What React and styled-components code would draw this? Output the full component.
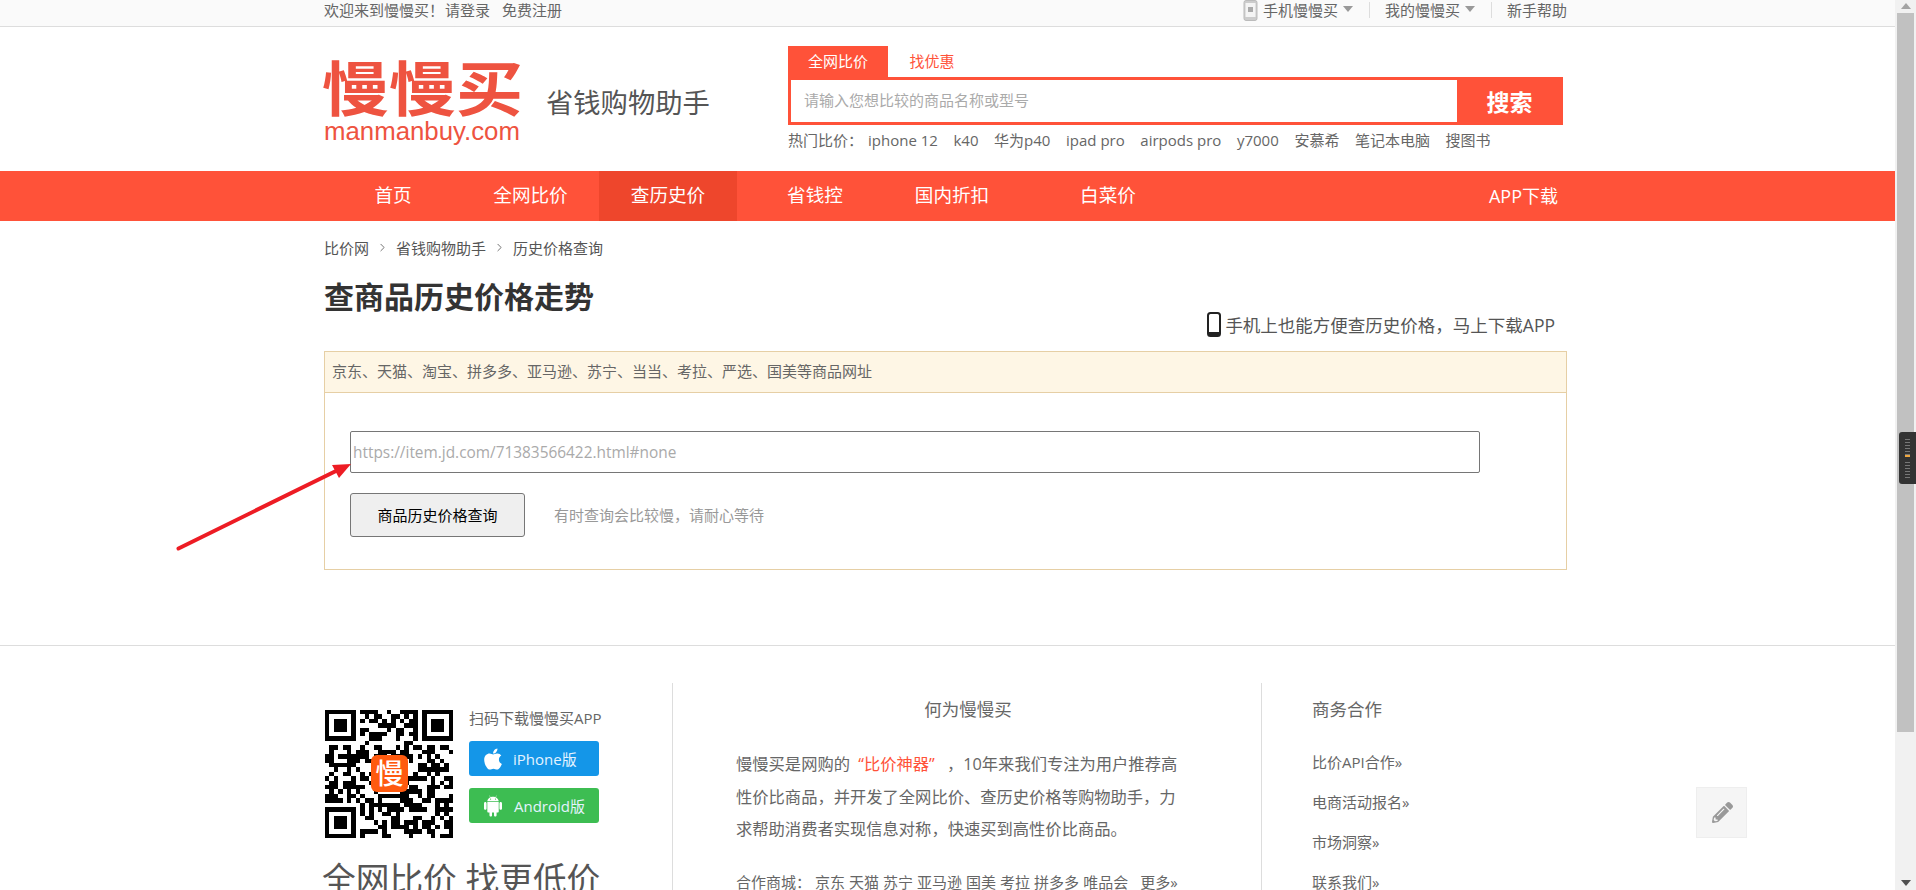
import React from "react";
import styled, { createGlobalStyle } from "styled-components";
import { FaApple, FaPencilAlt } from "react-icons/fa";
import { AiFillAndroid } from "react-icons/ai";
import { ChevronRight } from "lucide-react";

const RED = "#ff5239";
const FONT = `"Open Sans", "Noto Sans CJK SC", sans-serif`;

const GlobalStyle = createGlobalStyle`
  html, body { margin: 0; padding: 0; background: #fff; overflow: hidden; }
  body { font-family: ${FONT}; color: #666; }
  * { box-sizing: border-box; }
`;

const Page = styled.div`
  display: flex;
  height: 890px;
  overflow: hidden;
`;

const Main = styled.div`
  position: relative;
  flex: 1;
  min-width: 0;
  overflow: hidden;
`;

const Wrap = styled.div`
  width: 1243px;
  margin-left: 324px;
`;

/* top bar */
const TopBar = styled.div`
  height: 27px;
  background: #fafafa;
  border-bottom: 1px solid #ddd;
`;

const TopInner = styled(Wrap)`
  display: flex;
  justify-content: space-between;
  height: 26px;
  font-size: 15px;
  line-height: 20px;
  color: #666;
`;

const TopLeft = styled.div`
  display: flex;
  gap: 1px;
  span + span + span { margin-left: 11px; }
`;

const TopRight = styled.div`
  display: flex;
  align-items: flex-start;
`;

const Caret = styled.i`
  width: 0;
  height: 0;
  margin: 6px 0 0 5px;
  border-left: 5px solid transparent;
  border-right: 5px solid transparent;
  border-top: 6px solid #999;
`;

const TopDivider = styled.i`
  width: 1px;
  height: 16px;
  margin: 2px 15px 0 16px;
  background: #ddd;
`;

const TopPhone = styled.svg`
  width: 15px;
  height: 21px;
  margin-right: 5px;
`;

/* logo + search */
const Header = styled(Wrap)`
  display: flex;
  height: 144px;
`;

const Brand = styled.div`
  display: flex;
  width: 464px;
`;

const Logo = styled.div`
  width: 196px;
  padding-top: 31px;
  color: #ee5340;
`;

const LogoMark = styled.div`
  height: 59px;
  margin-left: -2px;
  font-family: "Noto Sans CJK SC", sans-serif;
  font-size: 67px;
  font-weight: 700;
  line-height: 60px;
  white-space: nowrap;
  transform: scaleY(0.89);
  transform-origin: 50% 0;
`;

const LogoDomain = styled.div`
  font-family: "Liberation Sans", sans-serif;
  font-size: 25.8px;
  line-height: 28px;
  white-space: nowrap;
`;

const Slogan = styled.div`
  margin: 59px 0 0 26px;
  font-size: 27.3px;
  line-height: 34px;
  color: #555;
  white-space: nowrap;
`;

const SearchCol = styled.div`
  width: 775px;
  padding-top: 19px;
`;

const Tabs = styled.div`
  display: flex;
  height: 31px;
`;

const Tab = styled.div`
  width: ${(p) => (p.$active ? "100px" : "88px")};
  font-size: 15px;
  line-height: 30px;
  text-align: center;
  color: ${(p) => (p.$active ? "#fff" : RED)};
  background: ${(p) => (p.$active ? RED : "transparent")};
`;

const SearchBox = styled.div`
  display: flex;
  height: 48px;
  border: 3px solid ${RED};
`;

const SearchInput = styled.input`
  flex: 1;
  min-width: 0;
  padding: 0 0 2px 13px;
  border: 0;
  outline: 0;
  font: 15px ${FONT};
  &::placeholder { color: #aaa; opacity: 1; }
`;

const SearchButton = styled.button`
  width: 103px;
  padding: 0 0 0 2px;
  border: 0;
  background: ${RED};
  color: #fff;
  font: 700 23px "Noto Sans CJK SC", sans-serif;
`;

const HotRow = styled.div`
  display: flex;
  margin-top: 5px;
  font-size: 15px;
  line-height: 20px;
  color: #666;
  white-space: nowrap;
`;

const HotLabel = styled.span`
  width: 80px;
`;

const HotList = styled.div`
  display: flex;
  gap: 15.6px;
`;

/* nav */
const Nav = styled.nav`
  height: 50px;
  background: ${RED};
`;

const NavInner = styled(Wrap)`
  display: flex;
  height: 100%;
`;

const NavItem = styled.div`
  width: ${(p) => p.$w}px;
  font-size: 18.6px;
  line-height: 48px;
  text-align: center;
  color: #fff;
  background: ${(p) => (p.$active ? "#ee462c" : "transparent")};
  white-space: nowrap;
`;

const NavApp = styled.div`
  margin-left: auto;
  padding-right: 9px;
  font-size: 18px;
  line-height: 50px;
  color: #fff;
`;

/* content */
const Crumbs = styled.div`
  display: flex;
  align-items: center;
  height: 20px;
  margin-top: 16px;
  font-size: 15px;
  color: #555;
  svg { margin: 0 7px; color: #555; }
`;

const TitleRow = styled.div`
  display: flex;
  justify-content: space-between;
  align-items: flex-start;
  height: 94px;
  padding: 20px 12px 0 0;
`;

const Title = styled.h1`
  margin: 0;
  font-size: 30px;
  font-weight: 700;
  line-height: 40px;
  color: #333;
`;

const AppHint = styled.div`
  display: flex;
  align-items: center;
  gap: 4px;
  margin-top: 35px;
  font-size: 17.5px;
  line-height: 24px;
  color: #555;
`;

const Panel = styled.section`
  border: 1px solid #e6cfa5;
`;

const PanelHead = styled.div`
  height: 41px;
  padding-left: 7px;
  border-bottom: 1px solid #e6cfa5;
  background: #fef6e5;
  font-size: 15px;
  line-height: 39px;
  color: #666;
`;

const PanelBody = styled.div`
  padding: 38px 25px 32px;
`;

const UrlInput = styled.input`
  display: block;
  width: 1130px;
  height: 42px;
  padding: 0 2px;
  border: 1px solid #767676;
  border-radius: 2px;
  outline: 0;
  font: 15.4px ${FONT};
  &::placeholder { color: #aaa; opacity: 1; }
`;

const QueryRow = styled.div`
  display: flex;
  align-items: center;
  margin-top: 20px;
`;

const QueryButton = styled.button`
  width: 175px;
  height: 44px;
  padding: 0 0 2px;
  border: 1px solid #767676;
  border-radius: 3px;
  background: #efefef;
  color: #000;
  font: 15px ${FONT};
`;

const QueryNote = styled.span`
  margin: -2px 0 0 29px;
  font-size: 15px;
  color: #999;
`;

const Arrow = styled.svg`
  position: absolute;
  left: 170px;
  top: 455px;
  width: 190px;
  height: 105px;
`;

/* footer */
const Footer = styled.footer`
  margin-top: 75px;
  border-top: 1px solid #ddd;
`;

const FooterCols = styled(Wrap)`
  display: flex;
  padding-top: 37px;
`;

const AppCol = styled.div`
  width: 349px;
  height: 220px;
  border-right: 1px solid #ddd;
  padding-top: 27px;
`;

const AppTop = styled.div`
  display: flex;
`;

const QrBox = styled.div`
  position: relative;
  width: 128px;
  height: 128px;
  margin-left: 1px;
  svg { display: block; width: 100%; height: 100%; }
`;

const QrBadge = styled.div`
  position: absolute;
  left: 46px;
  top: 45px;
  width: 37px;
  height: 37px;
  border-radius: 6px;
  background: #ff5a0f;
  color: #fff;
  font-size: 28px;
  font-weight: 500;
  line-height: 36px;
  text-align: center;
`;

const AppLinks = styled.div`
  margin-left: 16px;
`;

const AppLabel = styled.div`
  margin-top: -3px;
  font-size: 15px;
  line-height: 22px;
  color: #666;
  white-space: nowrap;
`;

const StoreBadge = styled.div`
  display: flex;
  align-items: center;
  gap: ${(p) => p.$gap}px;
  width: 130px;
  height: 35px;
  margin-top: ${(p) => p.$top}px;
  padding-left: 12px;
  border-radius: 3px;
  background: ${(p) => p.$bg};
  color: #e4f3ff;
  font-size: 15px;
  white-space: nowrap;
`;

const Slogan2 = styled.div`
  margin: 18px 0 0 -2px;
  font-size: 33.7px;
  line-height: 46px;
  color: #555;
  white-space: nowrap;
`;

const AboutCol = styled.div`
  width: 589px;
  height: 220px;
  border-right: 1px solid #ddd;
  padding: 14px 0 0 63px;
`;

const ColTitle = styled.h3`
  margin: 0;
  font-size: 17.5px;
  font-weight: 400;
  line-height: 24px;
  color: #666;
  text-align: ${(p) => (p.$center ? "center" : "left")};
  width: ${(p) => (p.$center ? "464px" : "auto")};
`;

const AboutText = styled.p`
  margin: 27px 0 0;
  font-size: 16.3px;
  line-height: 32.5px;
  color: #666;
  white-space: nowrap;
  em { margin: 0 8px 0 4px; font-style: normal; color: ${RED}; }
`;

const Malls = styled.div`
  display: flex;
  gap: 4px;
  margin-top: 25px;
  font-size: 15px;
  line-height: 22px;
  color: #666;
  white-space: nowrap;
`;

const MoreLink = styled.span`
  margin-left: 8px;
`;

const BizCol = styled.div`
  padding: 14px 0 0 50px;
`;

const BizLink = styled.div`
  margin-top: ${(p) => (p.$first ? 30 : 18)}px;
  font-size: 15px;
  line-height: 22px;
  color: #666;
  white-space: nowrap;
`;

const FeedbackBtn = styled.div`
  position: absolute;
  left: 1696px;
  top: 787px;
  display: flex;
  align-items: center;
  justify-content: center;
  width: 51px;
  height: 51px;
  padding-left: 2px;
  border: 1px solid #eee;
  background: #f5f5f5;
  color: #999;
`;

/* browser scrollbar */
const ScrollBar = styled.div`
  position: relative;
  flex: 0 0 21px;
  padding: 13px 2px 0;
  background: #f1f1f1;
`;

const Thumb = styled.div`
  height: 719px;
  background: #c1c1c1;
`;

const ScrollArrow = styled.i`
  position: absolute;
  left: 6px;
  ${(p) => (p.$down ? "bottom: 4px;" : "top: 3px;")}
  width: 0;
  height: 0;
  border-left: 5px solid transparent;
  border-right: 5px solid transparent;
  ${(p) => (p.$down ? "border-top: 6px solid #505050;" : "border-bottom: 6px solid #a3a3a3;")}
`;

const Handle = styled.div`
  position: absolute;
  left: 4px;
  top: 432px;
  width: 17px;
  height: 52px;
  padding: 7px 6px;
  border-radius: 3px 0 0 3px;
  background: #333;
`;

const HandleTicks = styled.div`
  height: ${(p) => p.$h}px;
  margin-bottom: 5px;
  background: repeating-linear-gradient(#777 0 1px, transparent 1px 3px);
  border-bottom: ${(p) => (p.$mark ? "2px solid #f0a840" : "0")};
`;

// qr pattern is a fixed pseudo random fill, only the finder squares are real
const QR_SIZE = 29;
const qrPath = (() => {
  let seed = 71383;
  const rnd = () => {
    seed = (seed * 16807) % 2147483647;
    return seed / 2147483647;
  };
  const inFinder = (x, y, ox, oy) => x >= ox && x < ox + 8 && y >= oy && y < oy + 8;
  const finders = [
    [0, 0],
    [QR_SIZE - 8, 0],
    [0, QR_SIZE - 8],
  ];
  let d = "";
  for (let y = 0; y < QR_SIZE; y++) {
    for (let x = 0; x < QR_SIZE; x++) {
      if (finders.some(([ox, oy]) => inFinder(x, y, ox, oy))) {
        rnd();
        continue;
      }
      if (rnd() < 0.54) d += `M${x} ${y}h1v1h-1z`;
    }
  }
  [
    [0, 0],
    [QR_SIZE - 7, 0],
    [0, QR_SIZE - 7],
  ].forEach(([x, y]) => {
    d += `M${x} ${y}h7v1h-7zM${x} ${y + 6}h7v1h-7zM${x} ${y + 1}h1v5h-1zM${x + 6} ${y + 1}h1v5h-1zM${x + 2} ${y + 2}h3v3h-3z`;
  });
  return d;
})();

const hotWords = ["iphone 12", "k40", "华为p40", "ipad pro", "airpods pro", "y7000", "安慕希", "笔记本电脑", "搜图书"];
const navItems = [
  { label: "首页", w: 138 },
  { label: "全网比价", w: 137 },
  { label: "查历史价", w: 138, active: true },
  { label: "省钱控", w: 156 },
  { label: "国内折扣", w: 118 },
  { label: "白菜价", w: 194 },
];
const malls = ["京东", "天猫", "苏宁", "亚马逊", "国美", "考拉", "拼多多", "唯品会"];
const bizLinks = ["比价API合作»", "电商活动报名»", "市场洞察»", "联系我们»"];

const App = () => {
  return (
    <Page>
      <GlobalStyle />
      <Main>
        <TopBar>
          <TopInner>
            <TopLeft>
              <span>欢迎来到慢慢买！</span>
              <span>请登录</span>
              <span>免费注册</span>
            </TopLeft>
            <TopRight>
              <TopPhone viewBox="0 0 14 21">
                <rect x="0.5" y="0.5" width="13" height="20" rx="2" fill="#ccc" stroke="#bbb" />
                <rect x="2" y="3" width="10" height="14" fill="#f4f4f4" />
                <rect x="4.5" y="7" width="5" height="5" fill="#aaa" />
              </TopPhone>
              <span>手机慢慢买</span>
              <Caret />
              <TopDivider />
              <span>我的慢慢买</span>
              <Caret />
              <TopDivider />
              <span>新手帮助</span>
            </TopRight>
          </TopInner>
        </TopBar>

        <Header>
          <Brand>
            <Logo>
              <LogoMark>慢慢买</LogoMark>
              <LogoDomain>manmanbuy.com</LogoDomain>
            </Logo>
            <Slogan>省钱购物助手</Slogan>
          </Brand>
          <SearchCol>
            <Tabs>
              <Tab $active>全网比价</Tab>
              <Tab>找优惠</Tab>
            </Tabs>
            <SearchBox>
              <SearchInput placeholder="请输入您想比较的商品名称或型号" />
              <SearchButton>搜索</SearchButton>
            </SearchBox>
            <HotRow>
              <HotLabel>热门比价：</HotLabel>
              <HotList>
                {hotWords.map((w) => (
                  <span key={w}>{w}</span>
                ))}
              </HotList>
            </HotRow>
          </SearchCol>
        </Header>

        <Nav>
          <NavInner>
            {navItems.map((n) => (
              <NavItem key={n.label} $w={n.w} $active={n.active}>
                {n.label}
              </NavItem>
            ))}
            <NavApp>APP下载</NavApp>
          </NavInner>
        </Nav>

        <Wrap>
          <Crumbs>
            <span>比价网</span>
            <ChevronRight size={13} strokeWidth={1.5} />
            <span>省钱购物助手</span>
            <ChevronRight size={13} strokeWidth={1.5} />
            <span>历史价格查询</span>
          </Crumbs>
          <TitleRow>
            <Title>查商品历史价格走势</Title>
            <AppHint>
              <svg width="14" height="25" viewBox="0 0 14 25">
                <rect x="1" y="1" width="12" height="23" rx="2.5" fill="#fff" stroke="#222" strokeWidth="2" />
                <rect x="2" y="20" width="10" height="3" fill="#222" />
              </svg>
              手机上也能方便查历史价格，马上下载APP
            </AppHint>
          </TitleRow>
          <Panel>
            <PanelHead>京东、天猫、淘宝、拼多多、亚马逊、苏宁、当当、考拉、严选、国美等商品网址</PanelHead>
            <PanelBody>
              <UrlInput placeholder="https://item.jd.com/71383566422.html#none" />
              <QueryRow>
                <QueryButton>商品历史价格查询</QueryButton>
                <QueryNote>有时查询会比较慢，请耐心等待</QueryNote>
              </QueryRow>
            </PanelBody>
          </Panel>
        </Wrap>

        <Footer>
          <FooterCols>
            <AppCol>
              <AppTop>
                <QrBox>
                  <svg viewBox={`0 0 ${QR_SIZE} ${QR_SIZE}`} shapeRendering="crispEdges">
                    <path d={qrPath} fill="#000" />
                  </svg>
                  <QrBadge>慢</QrBadge>
                </QrBox>
                <AppLinks>
                  <AppLabel>扫码下载慢慢买APP</AppLabel>
                  <StoreBadge $bg="#1496e8" $gap={8} $top={12}>
                    <FaApple size={24} color="#fff" />
                    iPhone版
                  </StoreBadge>
                  <StoreBadge $bg="#3dbd52" $gap={9} $top={12}>
                    <AiFillAndroid size={24} color="#fff" />
                    Android版
                  </StoreBadge>
                </AppLinks>
              </AppTop>
              <Slogan2>全网比价 找更低价</Slogan2>
            </AppCol>
            <AboutCol>
              <ColTitle $center>何为慢慢买</ColTitle>
              <AboutText>
                慢慢买是网购的 <em>“比价神器”</em> ，10年来我们专注为用户推荐高
                <br />
                性价比商品，并开发了全网比价、查历史价格等购物助手，力
                <br />
                求帮助消费者实现信息对称，快速买到高性价比商品。
              </AboutText>
              <Malls>
                <span>合作商城：</span>
                {malls.map((m) => (
                  <span key={m}>{m}</span>
                ))}
                <MoreLink>更多»</MoreLink>
              </Malls>
            </AboutCol>
            <BizCol>
              <ColTitle>商务合作</ColTitle>
              {bizLinks.map((l, i) => (
                <BizLink key={l} $first={i === 0}>
                  {l}
                </BizLink>
              ))}
            </BizCol>
          </FooterCols>
        </Footer>

        <Arrow viewBox="0 0 190 105">
          <path d="M8.5 93.5 L168 15" stroke="#ed1c24" strokeWidth="4" strokeLinecap="round" fill="none" />
          <path d="M181 9 L162 10 L169 23 Z" fill="#ed1c24" />
        </Arrow>

        <FeedbackBtn>
          <FaPencilAlt size={21} />
        </FeedbackBtn>
      </Main>
      <ScrollBar>
        <ScrollArrow />
        <Thumb />
        <ScrollArrow $down />
        <Handle>
          <HandleTicks $h={18} $mark />
          <HandleTicks $h={16} />
        </Handle>
      </ScrollBar>
    </Page>
  );
};

export default App;
